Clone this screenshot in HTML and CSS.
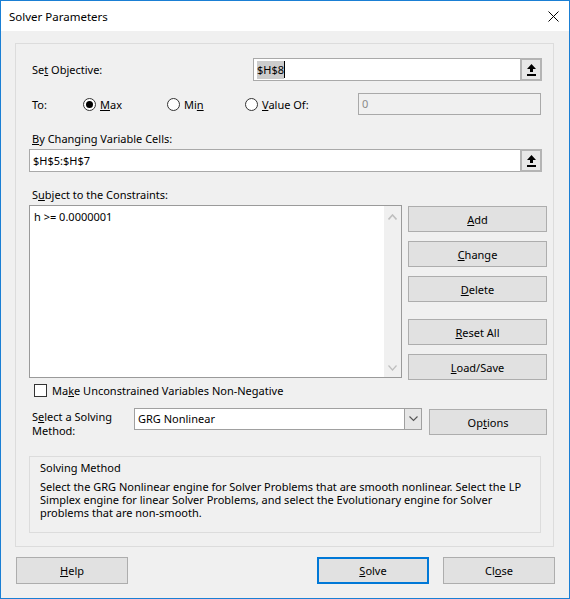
FILE: index.html
```html
<!DOCTYPE html>
<html>
<head>
<meta charset="utf-8">
<link rel="stylesheet" href="styles.css">
</head>
<body>
<div class="window">
  <div class="titlebar">
    <span class="title">Solver Parameters</span>
    <svg class="close" width="11" height="11" viewBox="0 0 11 11"><path d="M0.5 0.5 L10.5 10.5 M10.5 0.5 L0.5 10.5" stroke="#000" stroke-width="1"/></svg>
  </div>
  <div class="body">
    <div class="group">
      <div class="row obj-row">
        <span class="label obj-label">Se<u>t</u> Objective:</span>
        <div class="refedit obj-input">
          <span class="field"><span class="sel">$H$8</span><span class="caret"></span></span>
          <span class="refbtn"><svg width="11" height="12" viewBox="0 0 11 12"><path d="M5.5 0 L10 5 L7 5 L7 8 L4 8 L4 5 L1 5 Z" fill="#000"/><rect x="1" y="10" width="9" height="2" fill="#000"/></svg></span>
        </div>
      </div>
      <div class="row to-row">
        <span class="label to-label">To:</span>
        <span class="radio-item r-max"><span class="radio on"></span><span><u>M</u>ax</span></span>
        <span class="radio-item r-min"><span class="radio"></span><span>Mi<u>n</u></span></span>
        <span class="radio-item r-val"><span class="radio"></span><span><u>V</u>alue Of:</span></span>
        <span class="valbox">0</span>
      </div>
      <div class="label by-label"><u>B</u>y Changing Variable Cells:</div>
      <div class="refedit var-input">
        <span class="field">$H$5:$H$7</span>
        <span class="refbtn"><svg width="11" height="12" viewBox="0 0 11 12"><path d="M5.5 0 L10 5 L7 5 L7 8 L4 8 L4 5 L1 5 Z" fill="#000"/><rect x="1" y="10" width="9" height="2" fill="#000"/></svg></span>
      </div>
      <div class="label sub-label">S<u>u</u>bject to the Constraints:</div>
      <div class="cons-row">
        <div class="listbox">
          <div class="list-items"><div class="item">h &gt;= 0.0000001</div></div>
          <div class="scrollbar">
            <svg width="9" height="6" viewBox="0 0 9 6"><path d="M0.5 5.5 L4.5 1 L8.5 5.5" fill="none" stroke="#bfbfbf" stroke-width="1.6"/></svg>
            <svg width="9" height="6" viewBox="0 0 9 6"><path d="M0.5 0.5 L4.5 5 L8.5 0.5" fill="none" stroke="#bfbfbf" stroke-width="1.2"/></svg>
          </div>
        </div>
        <div class="btn-col">
          <button class="btn side"><u>A</u>dd</button>
          <button class="btn side"><u>C</u>hange</button>
          <button class="btn side"><u>D</u>elete</button>
          <button class="btn side gap-top"><u>R</u>eset All</button>
          <button class="btn side"><u>L</u>oad/Save</button>
        </div>
      </div>
      <div class="check-row">
        <span class="checkbox"></span>
        <span>Ma<u>k</u>e Unconstrained Variables Non-Negative</span>
      </div>
      <div class="method-row">
        <div class="label method-label">S<u>e</u>lect a Solving<br>Method:</div>
        <div class="combo">
          <span class="combo-text">GRG Nonlinear</span>
          <span class="combo-btn"><svg width="9" height="6" viewBox="0 0 9 6"><path d="M0.5 0.5 L4.5 4.5 L8.5 0.5" fill="none" stroke="#555" stroke-width="1.1"/></svg></span>
        </div>
        <button class="btn options">Op<u>t</u>ions</button>
      </div>
      <div class="info">
        <div class="info-title">Solving Method</div>
        <div class="info-text">Select the GRG Nonlinear engine for Solver Problems that are smooth nonlinear. Select the LP Simplex engine for linear Solver Problems, and select the Evolutionary engine for Solver problems that are non-smooth.</div>
      </div>
    </div>
    <div class="bottom-row">
      <button class="btn bottom"><u>H</u>elp</button>
      <div class="bottom-right">
        <button class="btn bottom default"><u>S</u>olve</button>
        <button class="btn bottom">Cl<u>o</u>se</button>
      </div>
    </div>
  </div>
</div>
</body>
</html>
```
FILE: styles.css
```css
* { box-sizing: border-box; }
html, body { margin: 0; padding: 0; }
body {
  width: 570px;
  height: 599px;
  font-family: "Noto Sans", "Open Sans", sans-serif;
  font-size: 11px;
  color: #000;
  background: #fff;
}
u { text-decoration: underline; text-underline-offset: 1px; }
.window {
  width: 570px;
  height: 599px;
  border: 1px solid #1a7fd4;
  background: #f0f0f0;
  display: flex;
  flex-direction: column;
}
.titlebar {
  height: 30px;
  background: #fff;
  display: flex;
  align-items: center;
  justify-content: space-between;
  padding: 0 10px 0 8px;
  flex: none;
}
.title { font-size: 11.5px; line-height: 15px; }
.close { display: block; }
.body {
  padding: 12px 15px 0 14px;
  display: flex;
  flex-direction: column;
}
.group {
  width: 539px;
  height: 504px;
  border: 1px solid #dcdcdc;
  padding: 14px 0 0 13px;
  display: flex;
  flex-direction: column;
}
.row { display: flex; align-items: center; }
.label { line-height: 15px; padding-left: 3px; }
.obj-label { width: 224px; }
.refedit {
  display: flex;
  height: 23px;
  border: 1px solid #a9a9a9;
  background: #fff;
}
.obj-input { width: 289px; }
.var-input { width: 513px; margin-top: 3px; }
.field {
  flex: 1;
  display: flex;
  align-items: center;
  padding-left: 3px;
  line-height: 15px;
}
.sel { background: #cccccc; line-height: 18px; }
.caret { display: inline-block; width: 1px; height: 17px; background: #000; }
.refbtn {
  width: 22px;
  margin: -1px -1px -1px 0;
  border: 2px solid #b4b4b4;
  background: #e8e8e8;
  display: flex;
  align-items: center;
  justify-content: center;
}
.refbtn svg { display: block; }
.to-row { margin-top: 12px; height: 22px; }
.to-label { width: 54px; }
.radio-item { display: flex; align-items: center; gap: 4px; }
.r-max { width: 84px; }
.r-min { width: 78px; }
.r-val { width: 113px; }
.radio {
  width: 13px;
  height: 13px;
  border: 1px solid #333;
  border-radius: 50%;
  background: #fff;
  display: flex;
  align-items: center;
  justify-content: center;
}
.radio.on::after {
  content: "";
  width: 7px;
  height: 7px;
  border-radius: 50%;
  background: #000;
}
.valbox {
  width: 183px;
  height: 22px;
  border: 1px solid #a9a9a9;
  background: #f0f0f0;
  color: #8a8a8a;
  padding: 2px 0 0 3px;
  line-height: 15px;
}
.by-label { margin-top: 16px; }
.sub-label { margin-top: 15px; }
.cons-row { display: flex; margin-top: 3px; }
.listbox {
  width: 373px;
  height: 173px;
  border: 1px solid #9a9a9a;
  background: #fff;
  display: flex;
}
.list-items { flex: 1; padding: 3px 0 0 4px; line-height: 15px; }
.scrollbar {
  width: 17px;
  background: #f0f0f0;
  display: flex;
  flex-direction: column;
  justify-content: space-between;
  align-items: center;
  padding: 8px 0 6px;
}
.scrollbar svg { display: block; }
.btn-col {
  margin-left: 6px;
  display: flex;
  flex-direction: column;
  gap: 9px;
  padding-top: 1px;
}
.btn {
  font-family: inherit;
  font-size: 11px;
  color: #000;
  background: #e1e1e1;
  border: 1px solid #adadad;
  padding: 0;
  line-height: 15px;
  margin: 0;
}
.side { width: 139px; height: 26px; }
.gap-top { margin-top: 8px; }
.check-row {
  display: flex;
  align-items: center;
  gap: 5px;
  margin-top: 3px;
  padding-left: 5px;
  line-height: 15px;
  height: 15px;
}
.checkbox {
  width: 13px;
  height: 13px;
  border: 1px solid #333;
  background: #fff;
}
.method-row {
  display: flex;
  align-items: flex-start;
  margin-top: 10px;
  height: 27px;
}
.method-label { width: 105px; line-height: 14px; padding-top: 2px; }
.combo {
  width: 288px;
  height: 22px;
  border: 1px solid #a0a0a0;
  background: #fff;
  display: flex;
}
.combo-text { flex: 1; padding: 2px 0 0 3px; line-height: 15px; }
.combo-btn {
  width: 18px;
  margin: -1px -1px -1px 0;
  border: 1px solid #a0a0a0;
  background: #e6e6e6;
  display: flex;
  align-items: center;
  justify-content: center;
}
.combo-btn svg { display: block; }
.options { width: 118px; height: 26px; margin-left: 7px; margin-top: 1px; }
.info {
  width: 512px;
  height: 77px;
  margin-top: 21px;
  border: 1px solid #dcdcdc;
  padding: 3px 10px 0 10px;
}
.info-title { line-height: 15px; }
.info-text { margin-top: 5px; line-height: 13px; }
.bottom-row {
  display: flex;
  justify-content: space-between;
  margin-top: 10px;
  padding-left: 1px;
  width: 540px;
}
.bottom-right { display: flex; gap: 14px; }
.bottom { width: 112px; height: 27px; }
.default { border: 2px solid #0078d7; }
```
